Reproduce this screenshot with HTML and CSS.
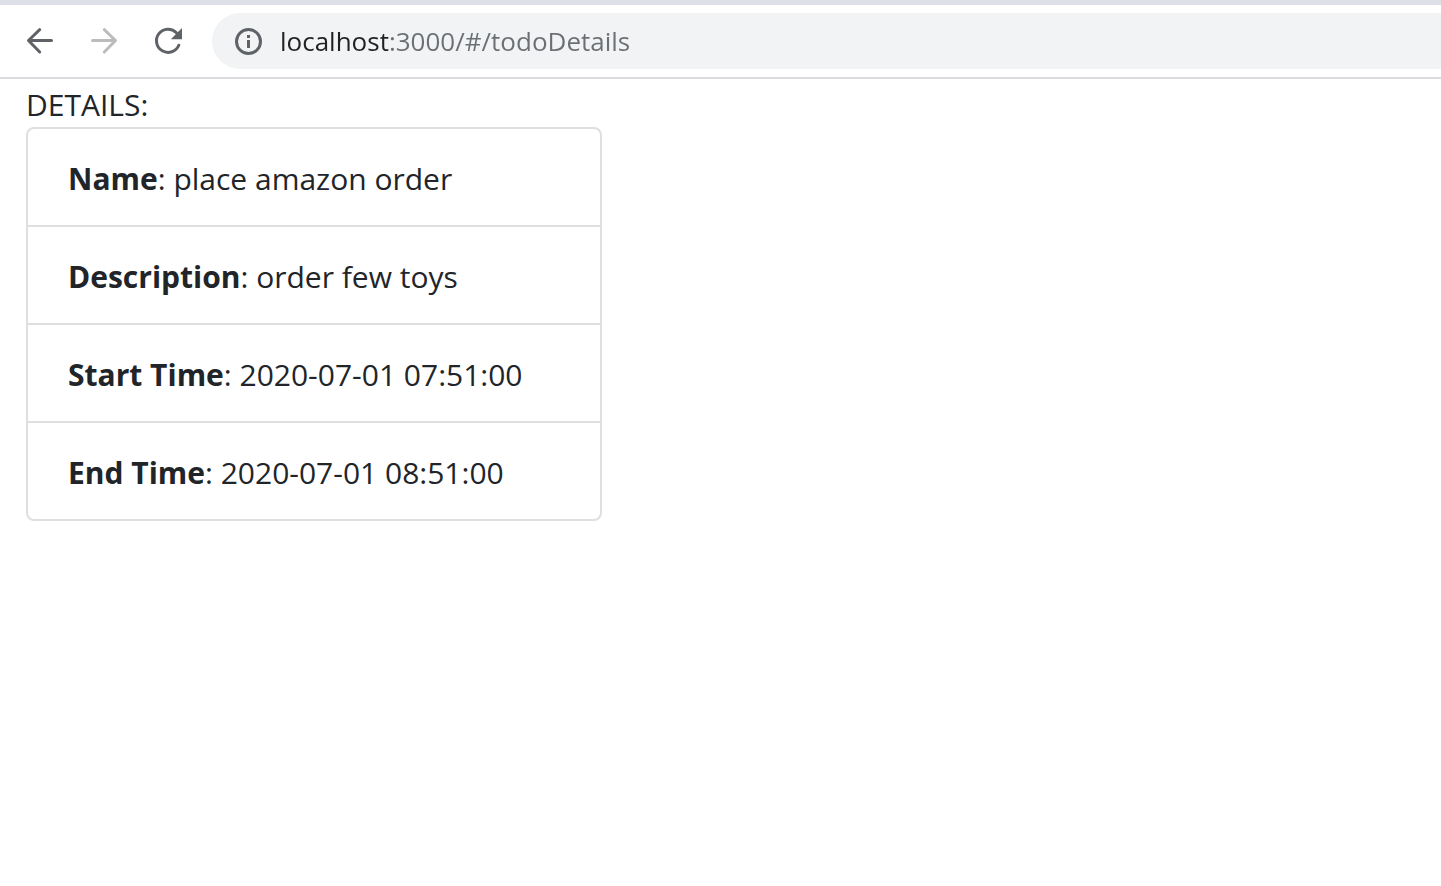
FILE: index.html
```html
<!DOCTYPE html>
<html lang="en">
<head>
  <meta charset="utf-8">
  <meta name="viewport" content="width=device-width, initial-scale=1">
  <title>Todo details</title>
  <link rel="stylesheet" href="styles.css">
</head>
<body>
  <header class="toolbar">
    <nav class="toolbar-nav" aria-label="Browser navigation">
      <button class="nav-button" type="button" aria-label="Back">
        <svg class="icon" viewBox="0 0 32 32" aria-hidden="true">
          <path class="stroke" d="M27.5 15.5H5M15.7 4.7L4.5 15.5L15.7 27"/>
        </svg>
      </button>
      <button class="nav-button" type="button" aria-label="Forward" disabled>
        <svg class="icon" viewBox="0 0 32 32" aria-hidden="true">
          <path class="stroke" d="M4.5 15.5H27M16.3 4.7L27.5 15.5L16.3 27"/>
        </svg>
      </button>
      <button class="nav-button" type="button" aria-label="Reload">
        <svg class="icon" viewBox="0 0 32 32" aria-hidden="true">
          <path class="stroke" d="M26.8 20.2A11.6 11.6 0 1 1 24.4 7.7"/>
          <path class="solid" d="M30 3V14.2H18.8Z"/>
        </svg>
      </button>
    </nav>
    <div class="address-bar">
      <svg class="icon" viewBox="0 0 32 32" aria-hidden="true">
        <circle class="stroke" cx="16.5" cy="16.5" r="12"/>
        <path class="solid" d="M15 10h3v3h-3zM15 15h3v8h-3z"/>
      </svg>
      <input class="address-input" type="text" aria-label="Address" value="localhost:3000/#/todoDetails" spellcheck="false">
    </div>
  </header>
  <main class="page">
    <div class="heading">DETAILS:</div>
    <ul class="details">
      <li class="detail"><b>Name</b>: place amazon order</li>
      <li class="detail"><b>Description</b>: order few toys</li>
      <li class="detail"><b>Start Time</b>: 2020-07-01 07:51:00</li>
      <li class="detail"><b>End Time</b>: 2020-07-01 08:51:00</li>
    </ul>
  </main>
</body>
</html>
```
FILE: styles.css
```css
* {
  box-sizing: border-box;
}

body {
  margin: 0;
  background: #fff;
  color: #212529;
  font-family: "Segoe UI", "Open Sans", sans-serif;
  font-size: 30px;
  line-height: 44px;
}

.toolbar {
  display: flex;
  align-items: center;
  gap: 16px;
  padding: 8px 0 8px 12px;
  border-top: 5px solid #dee0e8;
  border-bottom: 2px solid #dadce0;
}

.toolbar-nav {
  display: flex;
  gap: 8px;
}

.nav-button {
  display: flex;
  align-items: center;
  justify-content: center;
  width: 56px;
  height: 56px;
  padding: 0;
  border: 0;
  border-radius: 28px;
  background: transparent;
  color: #5f6368;
}

.nav-button:disabled {
  color: #babcbe;
}

.icon {
  flex: none;
  width: 32px;
  height: 32px;
}

.stroke {
  fill: none;
  stroke: currentColor;
  stroke-width: 3;
  stroke-linecap: round;
  stroke-linejoin: round;
}

.solid {
  fill: currentColor;
}

.address-bar {
  flex: 1;
  display: flex;
  align-items: center;
  gap: 16px;
  height: 56px;
  padding-left: 20px;
  border-radius: 28px 0 0 28px;
  background: #f1f3f4;
  color: #5f6368;
}

/* The host is darker than the rest of the address. */
.address-input {
  flex: 1;
  min-width: 0;
  height: 40px;
  padding: 0;
  border: 0;
  outline: 0;
  background: linear-gradient(90deg, #202124 110px, #6b6f73 110px);
  background-clip: text;
  -webkit-background-clip: text;
  -webkit-text-fill-color: transparent;
  color: #202124;
  font-family: inherit;
  font-size: 26px;
}

.page {
  padding: 4px 26px 0;
}

.details {
  max-width: 576px;
  margin: 0;
  padding: 0;
  list-style: none;
  border: 2px solid #dfdfdf;
  border-radius: 8px;
}

.detail {
  padding: 28px 40px 24px;
}

.detail + .detail {
  border-top: 2px solid #dfdfdf;
}
```
